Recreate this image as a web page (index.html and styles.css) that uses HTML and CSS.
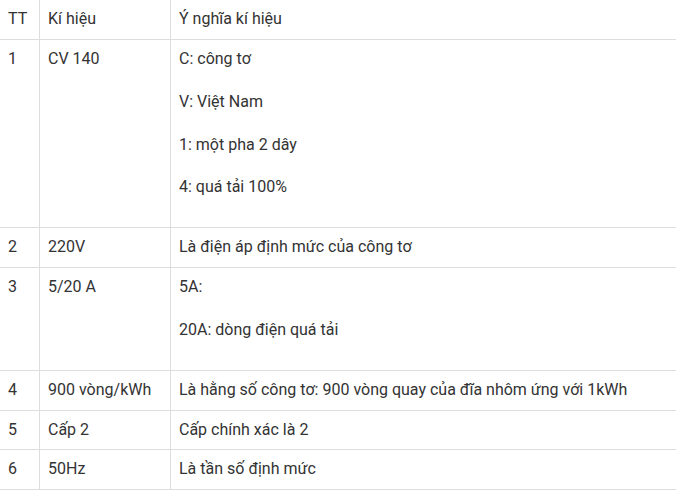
FILE: index.html
```html
<!DOCTYPE html>
<html lang="vi">
<head>
<meta charset="utf-8">
<link rel="stylesheet" href="styles.css">
</head>
<body>
<table class="tbl">
  <colgroup>
    <col class="c1">
    <col class="c2">
    <col class="c3">
  </colgroup>
  <tbody>
    <tr><td>TT</td><td>Kí hiệu</td><td>Ý nghĩa kí hiệu</td></tr>
    <tr><td>1</td><td>CV 140</td><td><p>C: công tơ</p><p>V: Việt Nam</p><p>1: một pha 2 dây</p><p>4: quá tải 100%</p></td></tr>
    <tr><td>2</td><td>220V</td><td>Là điện áp định mức của công tơ</td></tr>
    <tr><td>3</td><td>5/20 A</td><td><p>5A:</p><p>20A: dòng điện quá tải</p></td></tr>
    <tr><td>4</td><td>900 vòng/kWh</td><td>Là hằng số công tơ: 900 vòng quay của đĩa nhôm ứng với 1kWh</td></tr>
    <tr><td>5</td><td>Cấp 2</td><td>Cấp chính xác là 2</td></tr>
    <tr><td>6</td><td>50Hz</td><td>Là tần số định mức</td></tr>
  </tbody>
</table>
</body>
</html>
```
FILE: styles.css
```css
html, body {
  margin: 0;
  padding: 0;
  background: #fff;
}
body {
  font-family: Roboto, "Liberation Sans", sans-serif;
  font-size: 16px;
  line-height: 1.42857;
  color: #333;
}
.tbl {
  border-collapse: separate;
  border-spacing: 0;
  table-layout: fixed;
  width: 700px;
}
.c1 { width: 40px; }
.c2 { width: 131px; }
.tbl td {
  padding: 8px;
  vertical-align: top;
  border-right: 1px solid #ddd;
  border-bottom: 1px solid #ddd;
  white-space: nowrap;
}
.tbl td:last-child {
  border-right: none;
}
.tbl p {
  margin: 0 0 20px;
}
```
